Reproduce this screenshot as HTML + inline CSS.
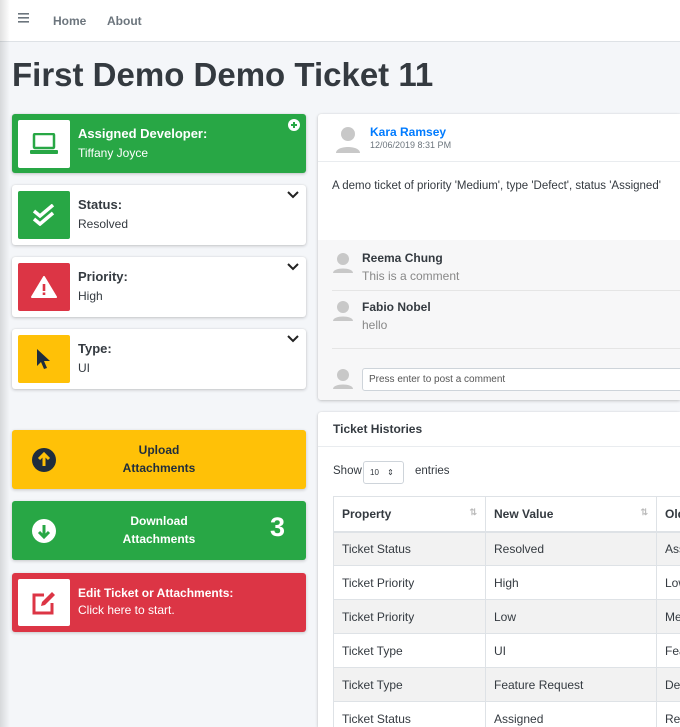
<!DOCTYPE html>
<html><head><meta charset="utf-8"><style>
*{box-sizing:border-box;margin:0;padding:0}
html,body{width:680px;height:727px;overflow:hidden}
body{background:#f4f6f9;font-family:"Liberation Sans",sans-serif;color:#343a40;position:relative;font-size:12px}
.shadow{position:absolute;left:0;top:0;width:10px;height:727px;background:linear-gradient(to right,rgba(0,0,0,.12),rgba(0,0,0,0));z-index:5}
.nav{position:absolute;left:0;top:0;width:680px;height:42px;background:#fff;border-bottom:1px solid #dee2e6}
.nav span{position:absolute;top:14px;font-weight:bold;font-size:12px;color:#6c757d}
h1{position:absolute;left:12px;top:56px;font-size:33px;font-weight:bold;color:#343a40;letter-spacing:0}
.card{position:absolute;left:12px;width:294px;border-radius:3px;box-shadow:0 0 1px rgba(0,0,0,.13),0 1px 3px rgba(0,0,0,.2);background:#fff}
.ib{position:absolute;left:6px;top:6px;width:52px;height:48px;border-radius:2px;display:flex;align-items:center;justify-content:center}
.lab{position:absolute;left:66px;top:12px;font-weight:bold;font-size:13px}
.val{position:absolute;left:66px;top:32px;font-size:12px}
.chev{position:absolute;right:7px;top:6px}
.btn{position:absolute;left:12px;width:294px;height:59px;border-radius:3px;box-shadow:0 1px 3px rgba(0,0,0,.2)}
.btn .t{position:absolute;width:100%;text-align:center;font-weight:bold;font-size:12px;line-height:18px}
.panel{position:absolute;left:318px;width:362px;overflow:hidden;background:#fff;box-shadow:0 0 1px rgba(0,0,0,.13),0 1px 3px rgba(0,0,0,.2);border-radius:3px 0 0 3px}
.av{position:absolute}
table{position:absolute;left:15px;top:84px;border-collapse:collapse;font-size:12px;table-layout:fixed;width:420px}
td,th{border:1px solid #dee2e6;height:34px;padding:0 8px;text-align:left;color:#343a40;white-space:nowrap;overflow:hidden}
th{font-weight:bold;border-bottom:2px solid #dee2e6;height:35px}
tr.o td{background:#f2f2f2}
</style></head><body>
<div class="shadow"></div>
<div class="nav">
<svg style="position:absolute;left:18px;top:13px" width="11" height="10"><rect y="0" width="11" height="1.6" fill="#6c757d"/><rect y="4" width="11" height="1.6" fill="#6c757d"/><rect y="8" width="11" height="1.6" fill="#6c757d"/></svg>
<span style="left:53px">Home</span><span style="left:107px">About</span>
</div>
<h1>First Demo Demo Ticket 11</h1>

<div class="card" style="top:114px;height:59px;background:#28a745;color:#fff">
<div class="ib" style="background:#fff"><svg width="28" height="22" viewBox="0 0 28 22"><rect x="4" y="1" width="20" height="14" rx="1" fill="none" stroke="#28a745" stroke-width="2.5"/><rect x="0" y="17" width="28" height="4" rx="1" fill="#28a745"/></svg></div>
<div class="lab" style="color:#fff">Assigned Developer:</div><div class="val" style="color:#fff">Tiffany Joyce</div>
<svg style="position:absolute;right:6px;top:5px" width="12" height="12"><circle cx="6" cy="6" r="6" fill="#fff"/><path d="M6 3v6M3 6h6" stroke="#28a745" stroke-width="2"/></svg>
</div>
<div class="card" style="top:185px;height:60px">
<div class="ib" style="background:#28a745"><svg width="26" height="22" viewBox="0 0 26 22"><path d="M3 7l6 5L22 1M3 15l6 5L22 9" fill="none" stroke="#fff" stroke-width="3.5"/></svg></div>
<div class="lab">Status:</div><div class="val">Resolved</div>
<svg class="chev" width="12" height="8"><path d="M1 1l5 5 5-5" fill="none" stroke="#222" stroke-width="2"/></svg>
</div>
<div class="card" style="top:257px;height:60px">
<div class="ib" style="background:#dc3545"><svg width="26" height="22" viewBox="0 0 26 22"><path d="M13 1L25 21H1z" fill="#fff" stroke="#fff" stroke-linejoin="round" stroke-width="2"/><rect x="11.7" y="8" width="2.6" height="7" fill="#dc3545"/><rect x="11.7" y="16.5" width="2.6" height="2.5" fill="#dc3545"/></svg></div>
<div class="lab">Priority:</div><div class="val">High</div>
<svg class="chev" width="12" height="8"><path d="M1 1l5 5 5-5" fill="none" stroke="#222" stroke-width="2"/></svg>
</div>
<div class="card" style="top:329px;height:60px">
<div class="ib" style="background:#ffc107"><svg width="16" height="22" viewBox="0 0 16 22"><path d="M1 1v17l4-4 3 7 3-1-3-7h6z" fill="#1f2d3d"/></svg></div>
<div class="lab">Type:</div><div class="val">UI</div>
<svg class="chev" width="12" height="8"><path d="M1 1l5 5 5-5" fill="none" stroke="#222" stroke-width="2"/></svg>
</div>

<div class="btn" style="top:430px;background:#ffc107;color:#1f2d3d">
<svg style="position:absolute;left:20px;top:18px" width="24" height="24"><circle cx="12" cy="12" r="12" fill="#1f2d3d"/><path d="M12 18V7M7 11l5-5 5 5" fill="none" stroke="#ffc107" stroke-width="3"/></svg>
<div class="t" style="top:11px">Upload<br>Attachments</div></div>
<div class="btn" style="top:501px;background:#28a745;color:#fff">
<svg style="position:absolute;left:20px;top:18px" width="24" height="24"><circle cx="12" cy="12" r="12" fill="#fff"/><path d="M12 6v11M7 13l5 5 5-5" fill="none" stroke="#28a745" stroke-width="3"/></svg>
<div class="t" style="top:11px">Download<br>Attachments</div>
<div style="position:absolute;right:21px;top:11px;font-size:27px;font-weight:bold">3</div></div>
<div class="btn" style="top:573px;background:#dc3545;color:#fff">
<div class="ib" style="background:#fff;width:52px;height:47px"><svg width="26" height="24" viewBox="0 0 26 24"><path d="M13 4H3v18h18V12" fill="none" stroke="#dc3545" stroke-width="3"/><path d="M10 15l1-4 10-10 3 3-10 10z" fill="#dc3545"/></svg></div>
<div class="lab" style="font-size:12px;top:13px;color:#fff">Edit Ticket or Attachments:</div><div class="val" style="top:30px;color:#fff">Click here to start.</div></div>

<div class="panel" style="top:114px;height:286px">
<svg class="av" style="left:17px;top:12px" width="26" height="28"><circle cx="13" cy="8" r="7" fill="#c8c8c8"/><path d="M1 27c0-8 24-8 24 0z" fill="#c8c8c8"/></svg>
<div style="position:absolute;left:52px;top:11px;color:#007bff;font-weight:bold;font-size:12px">Kara Ramsey</div>
<div style="position:absolute;left:52px;top:26px;color:#6c757d;font-size:9px">12/06/2019 8:31 PM</div>
<div style="position:absolute;left:0;top:47px;width:100%;border-top:1px solid #e9ecef"></div>
<div style="position:absolute;left:14px;top:66px;font-size:11.5px;white-space:nowrap">A demo ticket of priority 'Medium', type 'Defect', status 'Assigned'</div>
<div style="position:absolute;left:0;top:126px;width:100%;height:160px;background:#f7f7f8">
<svg class="av" style="left:15px;top:12px" width="20" height="22"><circle cx="10" cy="7" r="6" fill="#c8c8c8"/><path d="M0 21c0-6 20-6 20 0z" fill="#c8c8c8"/></svg>
<div style="position:absolute;left:44px;top:11px;font-weight:bold;font-size:12px">Reema Chung</div>
<div style="position:absolute;left:44px;top:29px;color:#888;font-size:12px">This is a comment</div>
<div style="position:absolute;left:14px;top:50px;right:0;border-top:1px solid #e5e5e5"></div>
<svg class="av" style="left:15px;top:60px" width="20" height="22"><circle cx="10" cy="7" r="6" fill="#c8c8c8"/><path d="M0 21c0-6 20-6 20 0z" fill="#c8c8c8"/></svg>
<div style="position:absolute;left:44px;top:60px;font-weight:bold;font-size:12px">Fabio Nobel</div>
<div style="position:absolute;left:44px;top:78px;color:#888;font-size:12px">hello</div>
<div style="position:absolute;left:14px;top:108px;right:0;border-top:1px solid #e5e5e5"></div>
<svg class="av" style="left:15px;top:128px" width="20" height="22"><circle cx="10" cy="7" r="6" fill="#c8c8c8"/><path d="M0 21c0-6 20-6 20 0z" fill="#c8c8c8"/></svg>
<div style="position:absolute;left:44px;top:128px;width:330px;height:23px;background:#fff;border:1px solid #ced4da;border-radius:3px;font-size:10px;color:#555;padding:5px 6px">Press enter to post a comment</div>
</div>
</div>

<div class="panel" style="top:412px;height:315px;border-radius:3px 0 0 0">
<div style="position:absolute;left:15px;top:10px;font-weight:bold;font-size:12px">Ticket Histories</div>
<div style="position:absolute;left:0;top:34px;width:100%;border-top:1px solid #e9ecef"></div>
<div style="position:absolute;left:15px;top:53px;font-size:11.5px">Show</div>
<div style="position:absolute;left:45px;top:49px;width:41px;height:23px;border:1px solid #ced4da;border-radius:3px;font-size:8px;padding:6px 6px;background:#fff">10 <span style="margin-left:6px">&#8661;</span></div>
<div style="position:absolute;left:97px;top:53px;font-size:11.5px">entries</div>
<table>
<colgroup><col style="width:152px"><col style="width:171px"><col style="width:97px"></colgroup>
<tr><th>Property <span style="float:right;color:#bbb;font-size:9px">&#8645;</span></th><th>New Value <span style="float:right;color:#bbb;font-size:9px">&#8645;</span></th><th>Old Value</th></tr>
<tr class="o"><td>Ticket Status</td><td>Resolved</td><td>Assigned</td></tr>
<tr><td>Ticket Priority</td><td>High</td><td>Low</td></tr>
<tr class="o"><td>Ticket Priority</td><td>Low</td><td>Medium</td></tr>
<tr><td>Ticket Type</td><td>UI</td><td>Feature</td></tr>
<tr class="o"><td>Ticket Type</td><td>Feature Request</td><td>Defect</td></tr>
<tr><td>Ticket Status</td><td>Assigned</td><td>Resolved</td></tr>
</table>
</div>
</body></html>
